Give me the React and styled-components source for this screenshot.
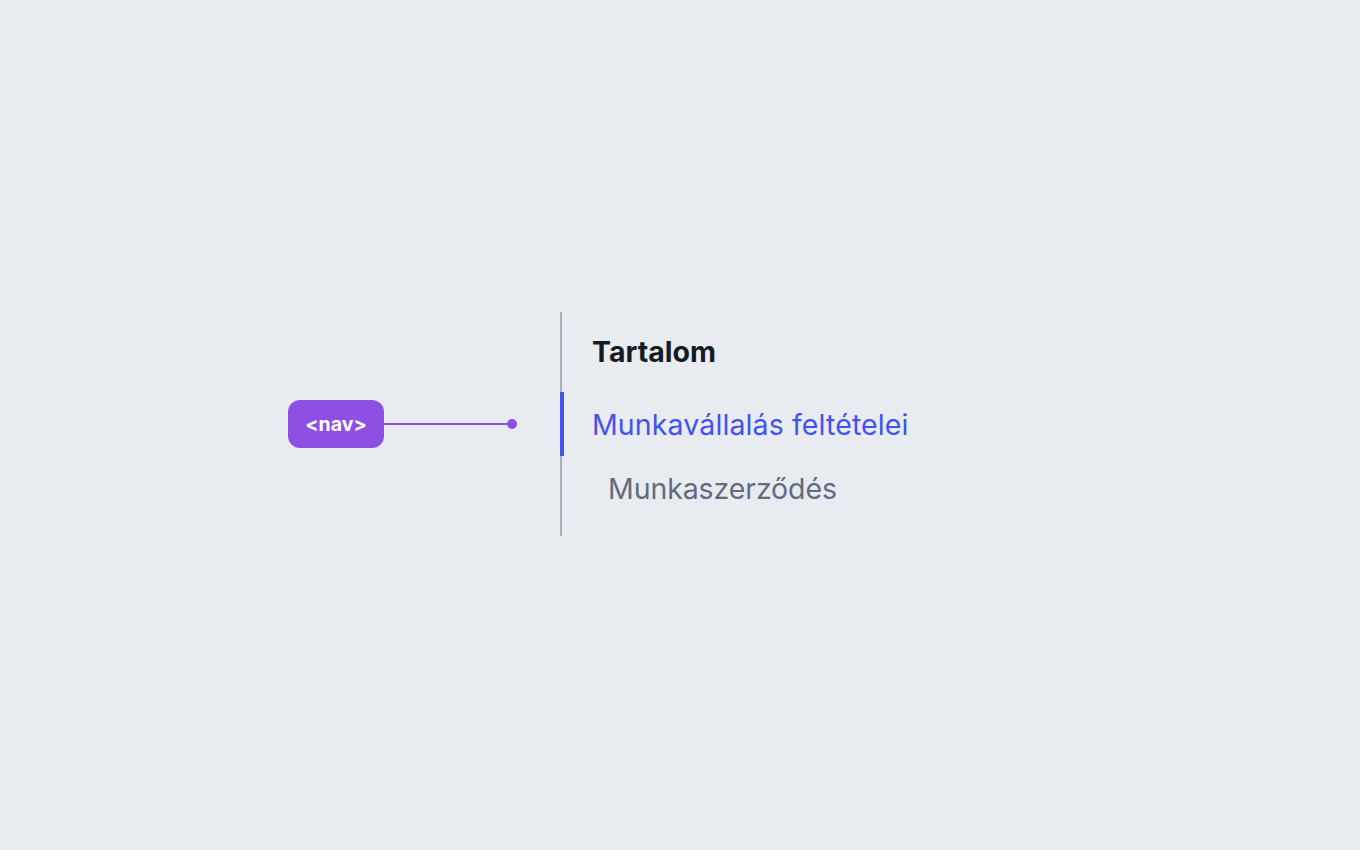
import styled, { createGlobalStyle } from 'styled-components';

const GlobalStyle = createGlobalStyle`
  body {
    margin: 0;
    background: #e8ebf0;
    font-family: Inter, 'Noto Sans', sans-serif;
  }
`;

const App = () => {
  return (
    <>
      <GlobalStyle />
      <Stage>
        <Badge>&lt;nav&gt;</Badge>
        <Connector>
          <Line />
          <Dot />
        </Connector>
        <Nav>
          <Title>Tartalom</Title>
          <Item $active>Munkavállalás feltételei</Item>
          <Item $nested>Munkaszerződés</Item>
        </Nav>
      </Stage>
    </>
  );
};

const Stage = styled.div`
  display: flex;
  align-items: center;
  min-height: 848px;
  padding-left: 288px;
  box-sizing: border-box;
`;

const Badge = styled.div`
  display: flex;
  align-items: center;
  justify-content: center;
  width: 96px;
  height: 48px;
  border-radius: 12px;
  background: #8e4fe3;
  color: #ffffff;
  font-size: 19.5px;
  font-weight: 700;
  box-sizing: border-box;
`;

const Connector = styled.div`
  display: flex;
  align-items: center;
  margin-right: 43px;
`;

const Line = styled.div`
  width: 125px;
  height: 2px;
  background: #8e4fe3;
`;

const Dot = styled.div`
  width: 10px;
  height: 10px;
  border-radius: 50%;
  background: #8e4fe3;
  margin-left: -2px;
`;

const Nav = styled.nav`
  display: flex;
  flex-direction: column;
  padding: 16px 0;
  border-left: 2px solid #a9aebb;
`;

const Title = styled.div`
  height: 48px;
  line-height: 48px;
  padding-left: 30px;
  margin-bottom: 16px;
  font-size: 28.5px;
  font-weight: 700;
  color: #161a23;
`;

const Item = styled.div`
  height: 64px;
  line-height: 65px;
  margin-left: -2px;
  border-left: 4px solid ${(p) => (p.$active ? '#4353ef' : 'transparent')};
  padding-left: ${(p) => (p.$nested ? '44px' : '28px')};
  padding-right: 16px;
  font-size: 28.5px;
  letter-spacing: ${(p) => (p.$active ? '0.12px' : '-0.1px')};
  color: ${(p) => (p.$active ? '#4353ef' : '#636b80')};
  white-space: nowrap;
`;

export default App;
